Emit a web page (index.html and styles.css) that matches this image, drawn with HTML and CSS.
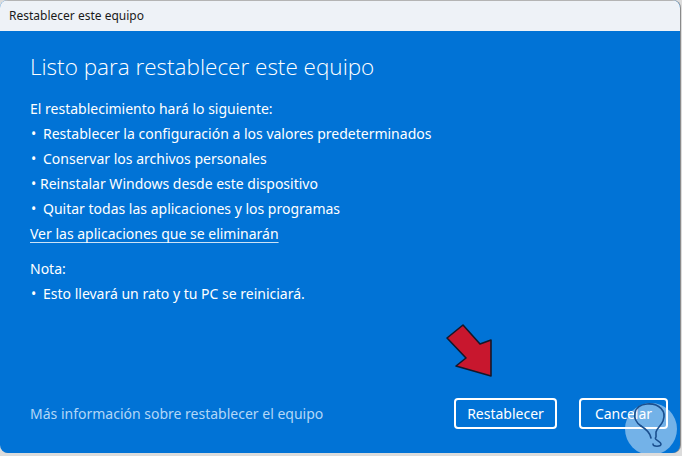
FILE: index.html
```html
<!DOCTYPE html>
<html lang="es">
<head>
<meta charset="utf-8">
<link rel="stylesheet" href="styles.css">
</head>
<body>
<div class="window">
  <div class="titlebar">Restablecer este equipo</div>
  <div class="content">
    <h1 class="heading">Listo para restablecer este equipo</h1>
    <p class="line">El restablecimiento hará lo siguiente:</p>
    <ul class="list">
      <li><span class="dot">•</span><span class="gap"></span>Restablecer la configuración a los valores predeterminados</li>
      <li><span class="dot">•</span><span class="gap"></span>Conservar los archivos personales</li>
      <li><span class="dot">•</span><span class="gap small"></span>Reinstalar Windows desde este dispositivo</li>
      <li><span class="dot">•</span><span class="gap"></span>Quitar todas las aplicaciones y los programas</li>
    </ul>
    <a class="link" href="#">Ver las aplicaciones que se eliminarán</a>
    <p class="line nota">Nota:</p>
    <ul class="list">
      <li><span class="dot">•</span><span class="gap"></span>Esto llevará un rato y tu PC se reiniciará.</li>
    </ul>
    <div class="spacer"></div>
    <div class="footer">
      <a class="more" href="#">Más información sobre restablecer el equipo</a>
      <div class="buttons">
        <button class="btn btn-reset">Restablecer</button>
        <button class="btn btn-cancel">Cancelar</button>
      </div>
    </div>
  </div>
  <svg class="arrow" width="56" height="60" viewBox="0 0 56 60">
    <path d="M7 18 L23 5 L40 24 L51 20 L51 56 L16 46 L26 38 Z" fill="#c8172e" stroke="#14182a" stroke-width="1.6" stroke-linejoin="round"/>
  </svg>
  <svg class="logo" width="58" height="58" viewBox="0 0 58 58">
    <circle cx="29" cy="30" r="26" fill="#ffffff" fill-opacity="0.45"/>
    <path d="M19 27 C9 20 11 6 25 5 C37 4 45 12 41 22 C39 27 35 29 34 33 L34 38 C31 41 39 42 39 45 C39 48 31 48 31 45" fill="none" stroke="#1b4f8e" stroke-width="1.6" stroke-linecap="round" stroke-linejoin="round"/>
    <path d="M19 27 C24 30 28 33 29 39" fill="none" stroke="#1b4f8e" stroke-width="1.6" stroke-linecap="round"/>
  </svg>
</div>
</body>
</html>
```

FILE: styles.css
```css
html, body {
  margin: 0;
  padding: 0;
}
body {
  width: 682px;
  height: 456px;
  background: #dcdcdc;
  font-family: "Noto Sans", "Open Sans", sans-serif;
  overflow: hidden;
}
.window {
  position: relative;
  width: 680px;
  height: 453px;
  border-radius: 8px;
  overflow: hidden;
  background: #0173d6;
  display: flex;
  flex-direction: column;
  box-shadow: 1px 0 0 #8a8a8a;
}
.titlebar {
  height: 31px;
  flex: none;
  box-sizing: border-box;
  background: #eef2f7;
  border-top: 1px solid #b4b4b4;
  padding: 6px 0 0 9px;
  font-size: 12px;
  line-height: 18px;
  color: #1a1a1a;
}
.content {
  flex: 1;
  display: flex;
  flex-direction: column;
  padding: 20px 0 0 30px;
  color: #ffffff;
}
.heading {
  margin: 0 0 13px;
  font-family: "Open Sans", sans-serif;
  font-weight: 300;
  font-size: 22.5px;
  line-height: 32px;
}
.line {
  margin: 0;
  font-size: 14px;
  line-height: 25px;
}
.list {
  list-style: none;
  margin: 0;
  padding: 0;
  font-size: 14px;
  line-height: 25px;
}
.list li {
  display: flex;
  align-items: baseline;
}
.dot {
  width: 4px;
  padding-left: 1px;
}
.gap {
  width: 8px;
}
.gap.small {
  width: 5px;
}
.link {
  align-self: flex-start;
  color: #ffffff;
  font-size: 14px;
  line-height: 25px;
  text-decoration: underline;
  text-underline-offset: 3px;
  text-decoration-thickness: 1px;
  text-decoration-color: rgba(255,255,255,0.8);
}
.nota {
  margin-top: 10px;
}
.spacer {
  flex: 1;
}
.footer {
  display: flex;
  align-items: center;
  justify-content: space-between;
  height: 31px;
  margin-bottom: 24px;
  padding-right: 12px;
}
.more {
  color: #b3d7f7;
  font-size: 14px;
  text-decoration: none;
}
.buttons {
  display: flex;
  gap: 22px;
}
.btn {
  height: 31px;
  box-sizing: border-box;
  border: 2px solid #ffffff;
  border-radius: 4px;
  background: #0173d6;
  color: #ffffff;
  font-family: "Noto Sans", "Open Sans", sans-serif;
  font-size: 14px;
  padding: 0;
}
.btn-reset {
  width: 103px;
}
.btn-cancel {
  width: 89px;
}
.arrow {
  position: absolute;
  left: 440px;
  top: 320px;
}
.logo {
  position: absolute;
  left: 622px;
  top: 399px;
}
```
